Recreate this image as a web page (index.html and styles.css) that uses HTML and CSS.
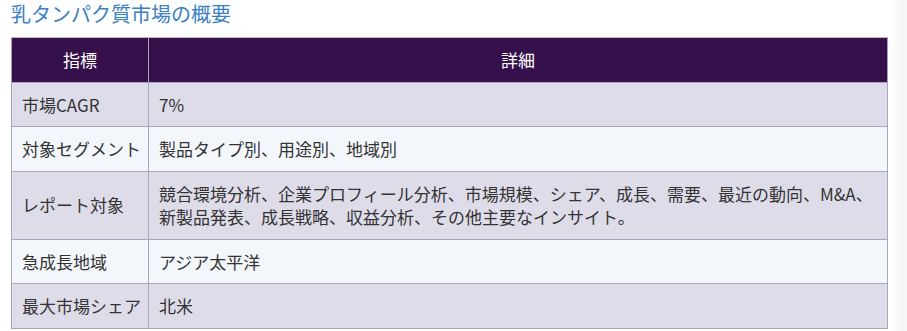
FILE: index.html
```html
<!DOCTYPE html>
<html lang="ja">
<head>
<meta charset="utf-8">
<link rel="stylesheet" href="styles.css">
</head>
<body>
<div class="page">
  <h2 class="title">乳タンパク質市場の概要</h2>
  <table class="summary">
    <colgroup><col class="col-key"><col></colgroup>
    <thead>
      <tr><th>指標</th><th>詳細</th></tr>
    </thead>
    <tbody>
      <tr><td>市場CAGR</td><td>7%</td></tr>
      <tr><td>対象セグメント</td><td>製品タイプ別、用途別、地域別</td></tr>
      <tr><td>レポート対象</td><td>競合環境分析、企業プロフィール分析、市場規模、シェア、成長、需要、最近の動向、M&amp;A、新製品発表、成長戦略、収益分析、その他主要なインサイト。</td></tr>
      <tr><td>急成長地域</td><td>アジア太平洋</td></tr>
      <tr><td>最大市場シェア</td><td>北米</td></tr>
    </tbody>
  </table>
</div>
</body>
</html>
```
FILE: styles.css
```css
html, body {
  margin: 0;
  padding: 0;
}
html {
  background: linear-gradient(to right, #ffffff 0, #ffffff 890px, #f6f6f6 900px, #f6f6f6 100%);
  min-height: 100%;
}
body {
  font-family: "Noto Sans CJK JP", "Noto Sans", sans-serif;
  color: #333333;
}
.page {
  width: 877px;
  padding: 0 0 0 11px;
}
.title {
  margin: 0;
  padding-top: 1px;
  height: 36px;
  font-size: 20px;
  font-weight: normal;
  color: #3a80c2;
  line-height: 26px;
}
.summary {
  width: 877px;
  table-layout: fixed;
  border-collapse: collapse;
  font-size: 17px;
  line-height: 23.5px;
}
.summary .col-key {
  width: 137px;
}
.summary th, .summary td {
  border: 1px solid #aaa5be;
  padding: 10px;
  text-align: left;
  vertical-align: middle;
  font-weight: normal;
}
.summary td:first-child {
  white-space: nowrap;
}
.summary th {
  background: #36104a;
  color: #ffffff;
  text-align: center;
  border-color: #a9a1b9;
  border-top-color: #bbb5c8;
}
.summary tbody tr:nth-child(odd) td {
  background: #dfdcea;
}
.summary tbody tr:nth-child(even) td {
  background: #f3f7fb;
}
```
